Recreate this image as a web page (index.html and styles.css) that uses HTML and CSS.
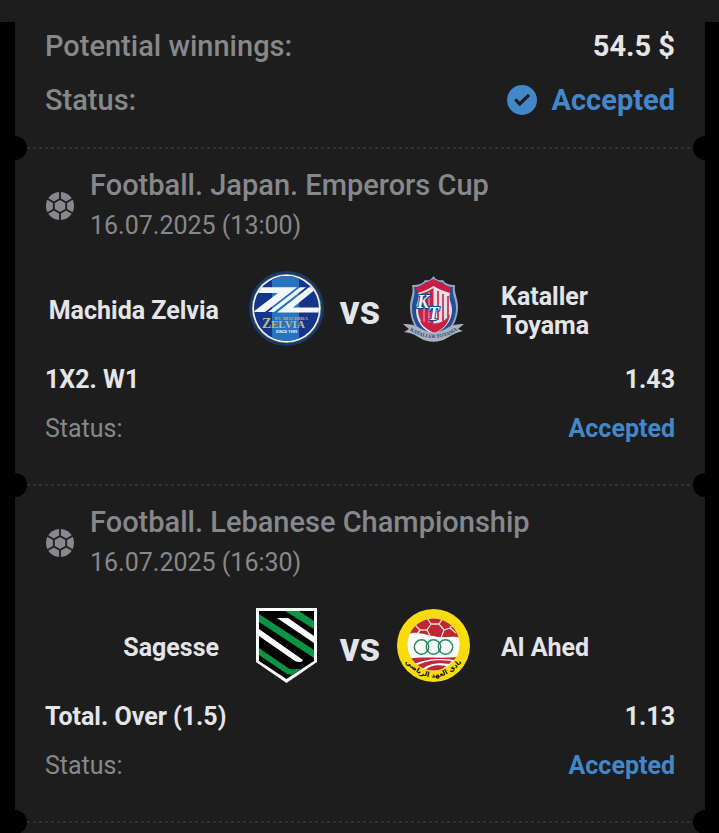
FILE: index.html
```html
<!DOCTYPE html>
<html lang="en">
<head>
<meta charset="utf-8">
<meta name="viewport" content="width=device-width, initial-scale=1">
<title>Bet slip</title>
<link rel="stylesheet" href="styles.css">
</head>
<body>
<svg class="defs" aria-hidden="true">
  <defs>
    <symbol id="ball" viewBox="0 0 28 28">
      <circle cx="14" cy="14" r="14" fill="currentColor"/>
      <path d="M14 7 20.200 10.500V17.500L14 21 7.800 17.500V10.500ZM14 7V0M20.200 10.500 27 6.500M20.200 17.500 27 21.500M14 21V28M7.800 17.500 1 21.500M7.800 10.500 1 6.500" fill="none" stroke="#1d1d1d" stroke-width="1.800"/>
    </symbol>
  </defs>
</svg>
<header class="topbar"></header>
<main class="ticket">
  <section class="summary">
    <div class="row">
      <span class="label">Potential winnings:</span>
      <span class="amount">54.5 $</span>
    </div>
    <div class="row">
      <span class="label">Status:</span>
      <span class="state">
        <svg class="check" viewBox="0 0 30 30" aria-hidden="true"><circle cx="15" cy="15" r="15" fill="#4387cb"/><path d="M8.300 14.400 12.800 19 22 9.800" fill="none" stroke="#1d1d1d" stroke-width="3.200"/></svg>
        Accepted
      </span>
    </div>
  </section>

  <section class="match">
    <div class="heading">
      <svg class="sport" aria-hidden="true"><use href="#ball"/></svg>
      <div>
        <h2 class="league">Football. Japan. Emperors Cup</h2>
        <p class="date">16.07.2025 (13:00)</p>
      </div>
    </div>
    <div class="teams">
      <span class="team home">Machida Zelvia</span>
      <svg class="logo" viewBox="0 0 75 75" role="img" aria-label="Machida Zelvia">
        <defs><clipPath id="mz"><circle cx="37.500" cy="37.500" r="32.500"/></clipPath></defs>
        <circle cx="37.500" cy="37.500" r="37.500" fill="#173a6b"/>
        <circle cx="37.500" cy="37.500" r="34.500" fill="#b9a878"/>
        <circle cx="37.500" cy="37.500" r="33.800" fill="#f5f7f8"/>
        <g clip-path="url(#mz)">
          <path fill="#14358a" d="M0 0H75V75H0Z"/>
          <path fill="#2873bd" d="M23 0H50V75H23Z"/>
          <g fill="#f4f8fb">
            <path d="M9 16.300H48L16 41H4L29 22H4Z"/>
            <path d="M51 16.300H57L25 41H19Z"/>
            <path d="M60 16.300H69L44 36.500H73V41.500H28Z"/>
          </g>
        </g>
        <g fill="#c4b886" font-family="Liberation Serif, serif" font-weight="bold">
          <text x="26" y="49" font-size="5">FC MACHIDA</text>
          <text x="13" y="57" font-size="14">Z</text>
          <text x="22" y="57" font-size="11">ELVIA</text>
        </g>
        <text x="37.500" y="62" text-anchor="middle" font-family="Roboto, sans-serif" font-weight="bold" font-size="4" fill="#e8edf6">SINCE 1989</text>
      </svg>
      <span class="versus">vs</span>
      <svg class="logo" viewBox="0 0 75 75" role="img" aria-label="Kataller Toyama">
        <path d="M37.500 5C40 9 43 10 47 9 49 13 54 14 59 14 58 23 62 27 62 36 62 51 53 66 37.500 70 22 66 14 51 14 36 14 27 18 23 16 14 22 14 27 13 29 9 33 10 35 9 37.500 5Z" fill="#8fa8c8"/>
        <path d="M37.500 8C40 12 43 12 46 11 49 15 53 16 57 16 56 25 60 28 60 37 60 51 51 64 37.500 68 24 64 16 51 16 37 16 28 20 25 18 16 23 16 27 15 30 11 33 12 35 12 37.500 8Z" fill="#234f96"/>
        <path d="M37.500 8 46 12 55 17 53 23 37.500 16 22 23 20 17 29 12Z" fill="#c61e45"/>
        <path d="M37.500 15C42 18 48 20 54 22 52 28 56 32 56 39 56 50 48 60 37.500 63 27 60 20 50 20 39 20 32 24 28 22 22 28 20 33 18 37.500 15Z" fill="#dfe1e8"/>
        <path d="M37.500 17C33 20 28 22 24 23 26 29 22 33 22 39 22 51 31 58 37.500 61Z" fill="#c5254b"/>
        <path d="M42 20V49M47 23V50M52 25V46" stroke="#cf4965" stroke-width="2"/>
        <path d="M28 24V54M33 21V56" stroke="#edacb7" stroke-width="1"/>
        <path d="M34 52C43 54 51 49 54 43 53 52 47 59 38 62 32 59 26 55 24 50Z" fill="#c91f43"/>
        <g font-family="Liberation Serif, serif" font-style="italic" font-weight="bold" fill="#f5f6fa" stroke="#214487" stroke-width="2" paint-order="stroke">
          <text x="21" y="37" font-size="18">K</text>
          <text x="32" y="49" font-size="18">T</text>
        </g>
        <path d="M7 53C15 53 19 54 22 56 32 63 43 63 53 56 57 54 61 53 68 53L62 58 67 60C59 62 56 64 51 67 43 72 32 72 24 67 19 64 16 62 8 61L13 58Z" fill="#a9b1ba"/>
        <path id="kt-arc" d="M12 58Q37.500 76 63 58" fill="none"/>
        <text font-family="Liberation Serif, serif" font-weight="bold" font-size="5" fill="#204685"><textPath href="#kt-arc" startOffset="50%" text-anchor="middle">KATALLER TOYAMA</textPath></text>
      </svg>
      <span class="team away">Kataller Toyama</span>
    </div>
    <div class="row bet"><span>1X2. W1</span><span>1.43</span></div>
    <div class="row result"><span>Status:</span><strong>Accepted</strong></div>
  </section>

  <section class="match">
    <div class="heading">
      <svg class="sport" aria-hidden="true"><use href="#ball"/></svg>
      <div>
        <h2 class="league">Football. Lebanese Championship</h2>
        <p class="date">16.07.2025 (16:30)</p>
      </div>
    </div>
    <div class="teams">
      <span class="team home">Sagesse</span>
      <svg class="logo" viewBox="0 0 75 75" role="img" aria-label="Sagesse">
        <defs><clipPath id="sg"><path d="M10 3H65V53L37.500 71 10 53Z"/></clipPath></defs>
        <path d="M7 0H68V54L37.500 75 7 54Z" fill="#fff"/>
        <g clip-path="url(#sg)">
          <path d="M0 0H75V75H0Z" fill="#000"/>
          <path d="M36 3H50L65 13V21ZM10 6 65 42V50L10 14ZM10 40 39 60C42 62 46 61 52 61L44 67 38 66 10 47Z" fill="#0b9444"/>
          <path d="M28 10H39L65 28V35ZM10 21 54 52C53 54 50 55 46 53L10 28Z" fill="#fff"/>
        </g>
      </svg>
      <span class="versus">vs</span>
      <svg class="logo" viewBox="0 0 75 75" role="img" aria-label="Al Ahed">
        <defs><clipPath id="aa"><circle cx="37.500" cy="36.500" r="26"/></clipPath></defs>
        <circle cx="37.500" cy="37.500" r="36.500" fill="#fbdc0b"/>
        <g clip-path="url(#aa)">
          <path d="M0 0H75V75H0Z" fill="#fff"/>
          <path d="M10 27C20 22 28 27 37 28 49 31 55 27 65 30V5H10Z" fill="#bd2832"/>
          <path d="M31 10 35 16H43L47 10M35 16 31 22 34 28M43 16 48 22 45 30M31 22 24 22 21 26M24 22 19 17M48 22 54 20 58 14M54 20 60 25" stroke="#f3dede" stroke-width="1.300" fill="none"/>
          <path d="M12 51C25 48 43 51 62 49L58 52C43 50 28 51 17 57ZM20 58C32 51 45 52 56 53L53 56C41 54 33 56 26 61ZM29 62C37 56 43 57 50 58L44 63H33Z" fill="#b9283b"/>
        </g>
        <g fill="none" stroke="#218b59" stroke-width="1.500"><circle cx="25.500" cy="39" r="7.200"/><circle cx="37.500" cy="39" r="7.200"/><circle cx="49.500" cy="39" r="7.200"/></g>
        <path id="aa-arc" d="M8 53Q37.500 86 67 53" fill="none"/>
        <text font-family="DejaVu Sans, sans-serif" font-weight="bold" font-size="7" fill="#111"><textPath href="#aa-arc" startOffset="50%" text-anchor="middle">نادي العهد الرياضي</textPath></text>
      </svg>
      <span class="team away">Al Ahed</span>
    </div>
    <div class="row bet"><span>Total. Over (1.5)</span><span>1.13</span></div>
    <div class="row result"><span>Status:</span><strong>Accepted</strong></div>
  </section>
  <div class="tear"></div>
</main>
</body>
</html>
```
FILE: styles.css
```css
* {
  box-sizing: border-box;
}

body {
  margin: 0;
  background: #000;
  color: #e4e5e8;
  font-family: Roboto, "Liberation Sans", sans-serif;
}

.defs {
  position: absolute;
  width: 0;
  height: 0;
}

.topbar {
  height: 22px;
  background: #1d1d1d;
}

.ticket {
  margin: 0 14px 0 15px;
  background: #1d1d1d;
  border-top: 1px solid #191919;
}

.row {
  display: flex;
  align-items: center;
  justify-content: space-between;
}

.summary {
  display: grid;
  gap: 18px;
  padding: 5px 30px 29px;
  font-size: 29px;
  line-height: 36px;
}

.label {
  color: #87888b;
  font-weight: 500;
}

.amount {
  font-weight: 700;
}

.state {
  display: flex;
  align-items: center;
  gap: 15px;
  color: #4387cb;
  font-weight: 700;
}

.check {
  width: 30px;
  height: 30px;
}

.match,
.tear {
  position: relative;
  background: repeating-linear-gradient(90deg, #313131 0 3px, transparent 3px 6px) 12px 0 / calc(100% - 24px) 2px no-repeat;
}

.match {
  padding: 18px 30px 36px;
}

.tear {
  height: 12px;
  clip-path: inset(-12px -15px 0);
}

.match::before,
.match::after,
.tear::before,
.tear::after {
  content: "";
  position: absolute;
  top: -11px;
  width: 24px;
  height: 24px;
  border-radius: 50%;
  background: #000;
}

.match::before,
.tear::before {
  left: -12px;
}

.match::after,
.tear::after {
  right: -12px;
}

.heading {
  display: flex;
  align-items: center;
  gap: 16px;
}

.sport {
  width: 28px;
  height: 28px;
  margin-left: 1px;
  color: #87888b;
}

.league,
.date {
  margin: 0;
  color: #87888b;
}

.league {
  margin-bottom: 1px;
  font-size: 29px;
  font-weight: 500;
  line-height: 40px;
}

.date {
  font-size: 25px;
  font-weight: 400;
  line-height: 40px;
}

.teams {
  display: grid;
  grid-template-columns: 1fr 75px 72px 75px 1fr;
  align-items: center;
  margin: 25px 0 15px;
}

.team {
  padding-top: 4px;
  font-size: 25px;
  font-weight: 700;
  line-height: 29px;
}

.home {
  padding-right: 30px;
  text-align: right;
}

.away {
  padding-left: 30px;
}

.logo {
  width: 75px;
  height: 75px;
}

.versus {
  padding-top: 4px;
  font-size: 40px;
  font-weight: 700;
  line-height: 40px;
  text-align: center;
}

.bet,
.result {
  font-size: 25px;
  line-height: 38px;
}

.bet {
  margin-bottom: 11px;
  font-weight: 700;
}

.result {
  color: #87888b;
}

.result strong {
  color: #4387cb;
}
```
